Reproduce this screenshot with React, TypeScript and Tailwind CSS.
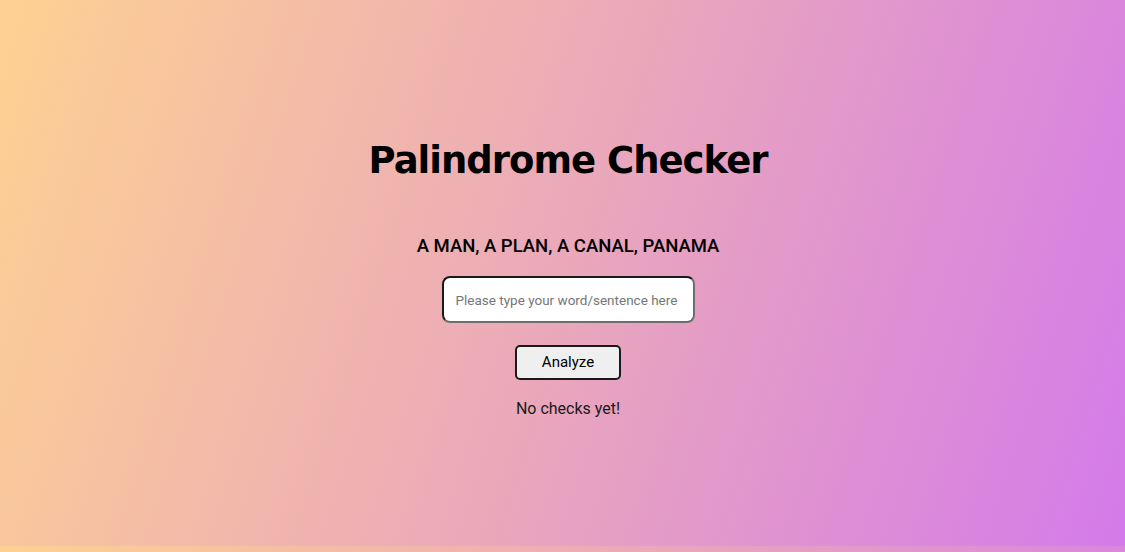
export default function App() {
  return (
    <div className="w-full" style={{ fontFamily: 'Roboto, "Liberation Sans", sans-serif' }}>
      <div className="h-[546px] bg-linear-[108deg] from-[#fed192] via-[#eaa8ba] to-[#d47aea] flex flex-col items-center pl-[11px] text-black">
        <h1
          className="mt-[137px] text-[37px] leading-[48px] font-bold tracking-[-1px]"
          style={{ fontFamily: '"DejaVu Sans", sans-serif' }}
        >
          Palindrome Checker
        </h1>
        <p className="mt-[50px] text-[18.5px] leading-[22px] font-medium">A MAN, A PLAN, A CANAL, PANAMA</p>
        <input
          type="text"
          placeholder="Please type your word/sentence here"
          className="mt-[19px] w-[253px] h-[47px] rounded-[8px] border-2 border-[#1a1a1a] border-b-[#6e6e6e] border-r-[#6e6e6e] bg-white px-[12px] text-[13.5px] placeholder:text-[#767676] outline-none"
        />
        <button className="mt-[22px] w-[106px] h-[35px] rounded-[5px] border-2 border-[#1a1a1a] bg-[#efefef] text-[15px] text-black">
          Analyze
        </button>
        <p className="mt-[19px] text-[16px] leading-[20px] text-[#1a1a1a]">No checks yet!</p>
      </div>
      <div className="h-[6px] overflow-hidden">
        <div className="h-[546px] bg-linear-[108deg] from-[#fed192] via-[#eaa8ba] to-[#d47aea]" />
      </div>
    </div>
  );
}
